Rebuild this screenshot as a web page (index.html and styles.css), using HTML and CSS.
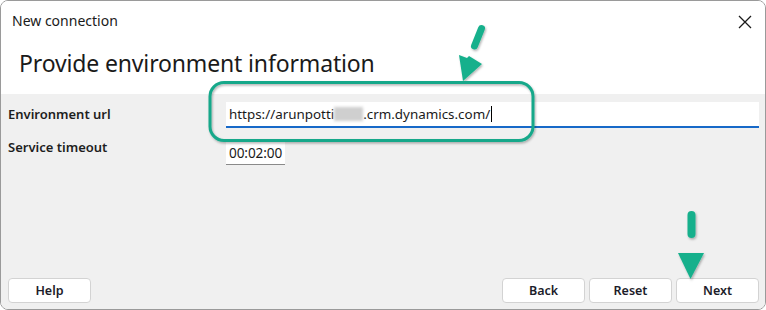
FILE: index.html
```html
<!DOCTYPE html>
<html>
<head>
<meta charset="utf-8">
<link rel="stylesheet" href="styles.css">
</head>
<body>
<div class="window">
  <div class="header">
    <div class="titlebar">
      <span class="title">New connection</span>
      <span class="close"><svg width="14" height="14" viewBox="0 0 14 14"><path d="M1 1 L13 13 M13 1 L1 13" stroke="#1a1a1a" stroke-width="1.3" fill="none"/></svg></span>
    </div>
    <h1 class="heading">Provide environment information</h1>
  </div>
  <div class="body">
    <div class="form">
      <div class="row">
        <label class="label">Environment url</label>
        <div class="input url">https://arunpotti<span class="blur"></span>.crm.dynamics.com/<span class="caret"></span></div>
      </div>
      <div class="row">
        <label class="label label-up">Service timeout</label>
        <div class="input time">00:02:00</div>
      </div>
    </div>
    <div class="buttons">
      <button class="btn">Help</button>
      <div class="spacer"></div>
      <button class="btn">Back</button>
      <button class="btn">Reset</button>
      <button class="btn">Next</button>
    </div>
  </div>
  <svg class="overlay" width="766" height="310" viewBox="0 0 766 310">
    <defs>
      <filter id="sh" x="-20%" y="-20%" width="140%" height="140%">
        <feDropShadow dx="1" dy="1.5" stdDeviation="1.2" flood-color="#000" flood-opacity="0.3"/>
      </filter>
    </defs>
    <g filter="url(#sh)">
      <rect x="210" y="82.5" width="323" height="58" rx="14" ry="14" fill="none" stroke="#16a88a" stroke-width="3"/>
      <line x1="481.5" y1="28.5" x2="474.5" y2="46" stroke="#16b08c" stroke-width="7" stroke-linecap="round"/>
      <polygon points="459,55 467,58 469,56 482,64 463,81" fill="#16b08c"/>
      <line x1="691.5" y1="215" x2="691.5" y2="234" stroke="#16b08c" stroke-width="8" stroke-linecap="round"/>
      <polygon points="678,253 704,253 690.5,279" fill="#16b08c"/>
    </g>
  </svg>
</div>
</body>
</html>
```
FILE: styles.css
```css
html, body {
  margin: 0;
  padding: 0;
  background: #ffffff;
}
.window {
  position: relative;
  width: 766px;
  height: 310px;
  box-sizing: border-box;
  border: 1px solid #9a9a9a;
  border-radius: 8px;
  overflow: hidden;
  display: flex;
  flex-direction: column;
  font-family: "Noto Sans", "Open Sans", sans-serif;
  color: #1a1a1a;
}
.header {
  height: 93px;
  background: #ffffff;
  display: flex;
  flex-direction: column;
}
.titlebar {
  display: flex;
  justify-content: space-between;
  align-items: center;
  padding: 9px 13px 0 11px;
  height: 22px;
}
.title {
  font-size: 14px;
  line-height: 20px;
}
.close {
  display: flex;
  width: 14px;
  height: 14px;
  margin-top: 1px;
}
.heading {
  margin: 16px 0 0 18px;
  font-size: 23px;
  font-weight: 400;
  line-height: 30px;
  letter-spacing: -0.15px;
}
.body {
  flex: 1;
  background: #f0f0f0;
  display: flex;
  flex-direction: column;
  padding: 8px 6px 6px 7px;
}
.form {
  display: flex;
  flex-direction: column;
  gap: 12px;
  flex: 1;
}
.row {
  display: flex;
  align-items: flex-start;
}
.label {
  width: 218px;
  font-size: 13px;
  font-weight: 600;
  line-height: 18px;
  padding-top: 3px;
  color: #1e1e1e;
}
.label-up {
  padding-top: 0;
  margin-top: -2px;
}
.input {
  background: #ffffff;
  font-size: 13.4px;
  line-height: 23px;
  box-sizing: border-box;
  display: flex;
  align-items: center;
}
.url {
  flex: 1;
  height: 26px;
  padding-left: 3px;
  border-bottom: 2px solid #1769c8;
}
.blur {
  display: inline-block;
  width: 29px;
  height: 14px;
  background: #cfcfcf;
  filter: blur(1.5px);
}
.caret {
  display: inline-block;
  width: 1px;
  height: 16px;
  background: #000;
  margin-left: 1px;
}
.time {
  width: 59px;
  height: 25px;
  padding-left: 3px;
  border-bottom: 1px solid #8a8a8a;
  font-size: 13.6px;
  letter-spacing: -0.1px;
}
.buttons {
  display: flex;
  gap: 4px;
}
.spacer {
  flex: 1;
}
.btn {
  width: 83px;
  height: 25px;
  box-sizing: border-box;
  background: #ffffff;
  border: 1px solid #d3d3d3;
  border-radius: 4px;
  font-family: "Noto Sans", "Open Sans", sans-serif;
  font-size: 12.5px;
  font-weight: 600;
  color: #1c1c2a;
  padding: 0;
}
.overlay {
  position: absolute;
  left: -1px;
  top: -1px;
  pointer-events: none;
}
```
